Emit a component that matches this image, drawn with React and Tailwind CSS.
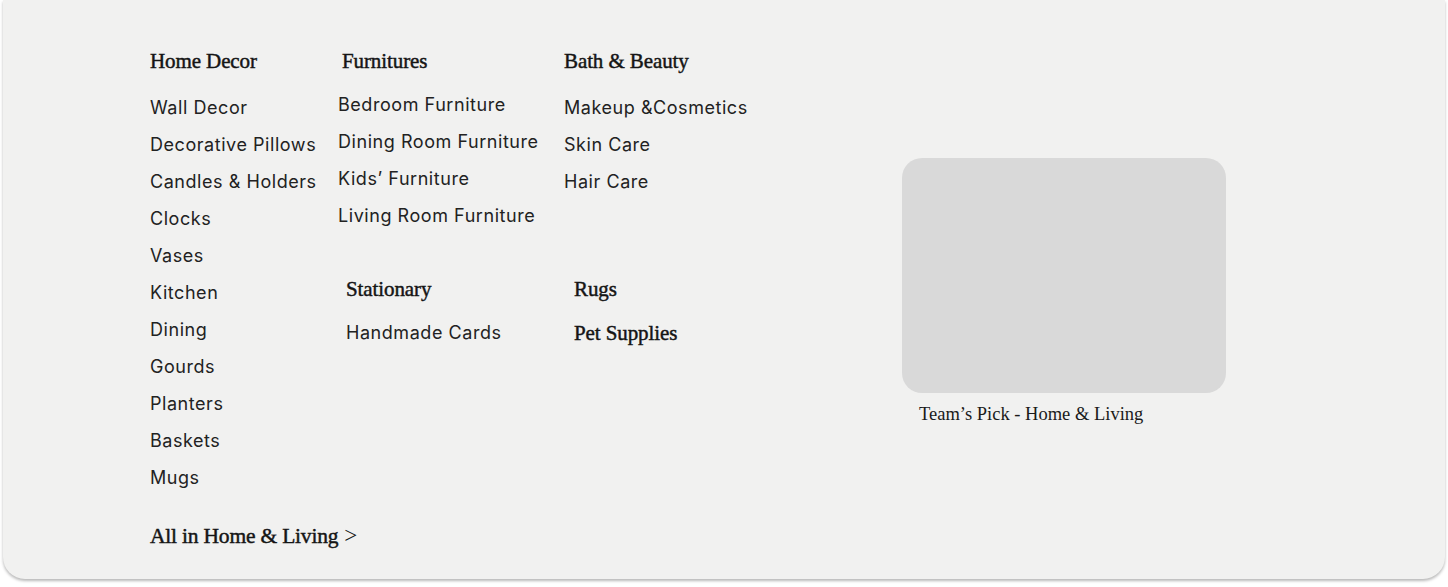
import React from 'react';

const serif = { fontFamily: '"Liberation Serif", "DejaVu Serif", serif' };

function Heading({ children, className = '' }) {
  return (
    <h3 className={`text-[21px] leading-[28px] text-[#151515] tracking-[-0.1px] [-webkit-text-stroke:0.45px_#151515] whitespace-nowrap ${className}`} style={serif}>
      {children}
    </h3>
  );
}

function LinkList({ items, className = '' }) {
  return (
    <ul className={`flex flex-col ${className}`}>
      {items.map((item) => (
        <li key={item} className="text-[18px] leading-[37px] tracking-[0.55px] font-normal text-[#222] whitespace-nowrap">
          {item}
        </li>
      ))}
    </ul>
  );
}

const homeDecor = [
  'Wall Decor',
  'Decorative Pillows',
  'Candles & Holders',
  'Clocks',
  'Vases',
  'Kitchen',
  'Dining',
  'Gourds',
  'Planters',
  'Baskets',
  'Mugs',
];

const furnitures = ['Bedroom Furniture', 'Dining Room Furniture', 'Kids’ Furniture', 'Living Room Furniture'];
const bathBeauty = ['Makeup &Cosmetics', 'Skin Care', 'Hair Care'];

export default function App() {
  return (
    <div className="w-[1448px] h-[587px] bg-white" style={{ fontFamily: 'Inter, "Open Sans", sans-serif' }}>
      <div className="mx-[3px] h-[579px] bg-[#f1f1f0] rounded-b-[22px] shadow-[0_2px_3px_rgba(0,0,0,0.28)] flex pl-[147px] pt-[47px]">
        {/* Home Decor */}
        <div className="w-[188px] flex flex-col">
          <Heading>Home Decor</Heading>
          <LinkList items={homeDecor} className="mt-[14px]" />
          <a className="mt-[26px] text-[21.5px] leading-[28px] tracking-[-0.2px] [-webkit-text-stroke:0.45px_#151515] text-[#151515] flex items-center gap-[6px] whitespace-nowrap" style={serif}>
            All in Home &amp; Living
            <span className="text-[23px] [-webkit-text-stroke:0px]">&gt;</span>
          </a>
        </div>

        {/* middle block */}
        <div className="w-[420px] flex flex-col">
          <div className="flex items-start">
            <div className="w-[226px] flex flex-col">
              <Heading className="ml-[4px]">Furnitures</Heading>
              <LinkList items={furnitures} className="mt-[11px]" />
            </div>
            <div className="flex flex-col">
              <Heading>Bath &amp; Beauty</Heading>
              <LinkList items={bathBeauty} className="mt-[14px]" />
            </div>
          </div>
          <div className="flex items-start mt-[41px] pl-[8px]">
            <div className="w-[228px] flex flex-col">
              <Heading>Stationary</Heading>
              <LinkList items={['Handmade Cards']} className="mt-[11px]" />
            </div>
            <div className="flex flex-col">
              <Heading>Rugs</Heading>
              <Heading className="mt-[16px]">Pet Supplies</Heading>
            </div>
          </div>
        </div>

        {/* Team's pick */}
        <div className="ml-[144px] pt-[111px] flex flex-col">
          <div className="w-[324px] h-[235px] rounded-[20px] bg-[#d9d9d9]" />
          <p className="mt-[8px] ml-[17px] text-[18.5px] leading-[26px] text-[#1a1a1a] whitespace-nowrap" style={serif}>
            Team’s Pick - Home &amp; Living
          </p>
        </div>
      </div>
    </div>
  );
}
